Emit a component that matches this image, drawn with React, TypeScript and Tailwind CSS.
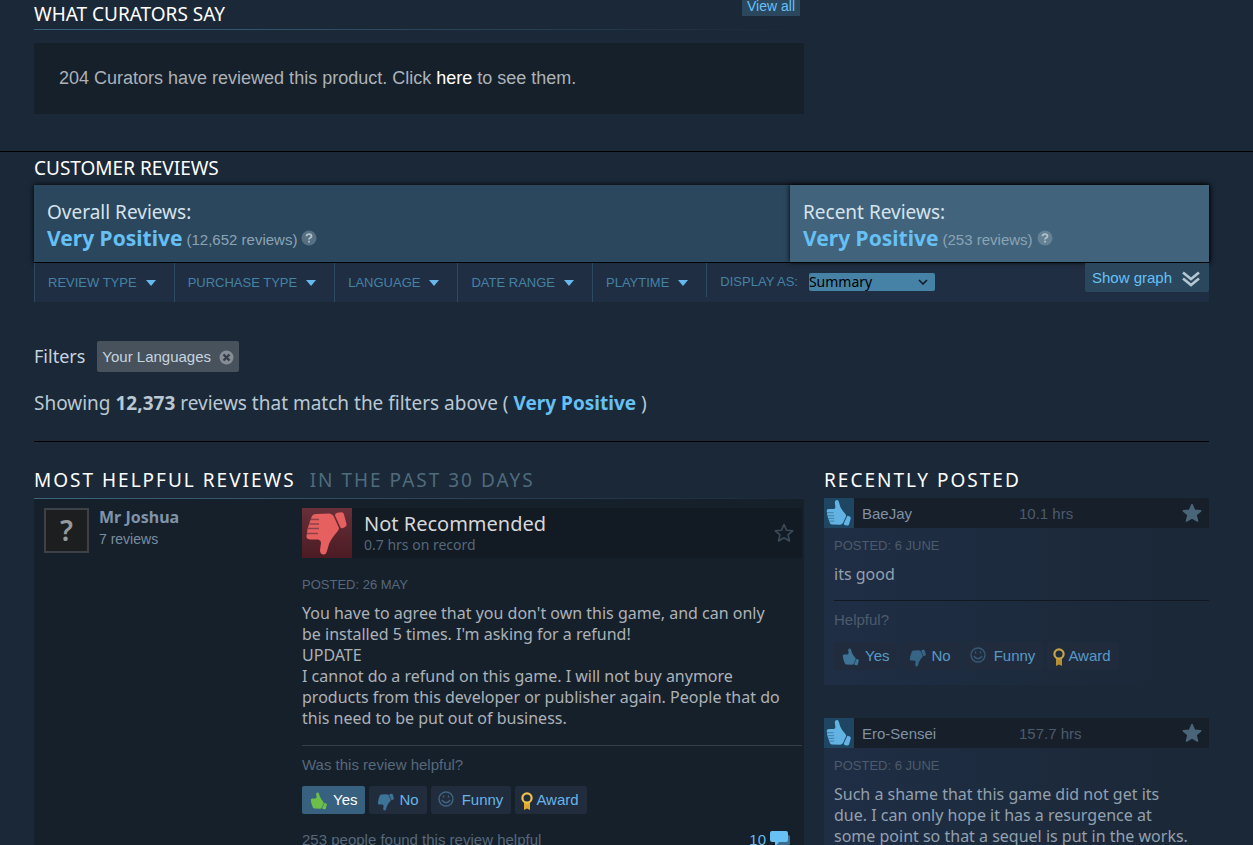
import type { ReactNode } from "react";

const filterMenus = ["REVIEW TYPE", "PURCHASE TYPE", "LANGUAGE", "DATE RANGE", "PLAYTIME"];

const recentReviews = [
  { name: "BaeJay", hours: "10.1 hrs", posted: "POSTED: 6 JUNE", text: "its good" },
  {
    name: "Ero-Sensei",
    hours: "157.7 hrs",
    posted: "POSTED: 6 JUNE",
    text: "Such a shame that this game did not get its due. I can only hope it has a resurgence at some point so that a sequel is put in the works.",
  },
];

/* -------- ICONS -------- */

function Thumb({ down = false, lines = "none", className }: { down?: boolean; lines?: string; className: string }) {
  return (
    <svg viewBox="0 0 50 50" className={className} aria-hidden="true">
      <g transform={down ? undefined : "translate(0 50) scale(1 -1)"}>
        <path
          fill="currentColor"
          d="M10 8Q11 6 14 6L27 5.500Q31 6 32 9L37 20Q37 22 35 24Q29 31 27 36L25 43Q24 47 21 46.500Q18 46 18 42L19 35Q19 32 16 31.500H8Q4 31 4.500 28L5 25.500L5.500 21L7 16.500L8.500 12Z"
        />
        <path fill="currentColor" d="M33 7.500Q33 5 35.500 4.700L39 4.200Q41.500 4 42 6.500L44.500 16Q45 18 43 19L40.500 20.200Q38.500 20.500 38 18.500Z" />
        <path stroke={lines} strokeWidth="1.3" fill="none" d="M9 11.500H17M7.500 16H17M6 20.500H17M5 25.500H16" />
      </g>
    </svg>
  );
}

function Star({ filled = false }: { filled?: boolean }) {
  return (
    <svg
      viewBox="0 0 22 22"
      className={filled ? "h-[22px] w-[22px] text-[#4a6578]" : "h-[22px] w-[22px] text-[#3b4b5a]"}
      fill={filled ? "currentColor" : "none"}
      stroke="currentColor"
      strokeWidth="1.6"
      strokeLinejoin="round"
      aria-hidden="true"
    >
      <path d="M11 2.500L13.500 8.300L19.700 8.800L15 12.900L16.500 19L11 15.800L5.500 19L7 12.900L2.300 8.800L8.500 8.300Z" />
    </svg>
  );
}

function Smile() {
  return (
    <svg viewBox="0 0 16 16" className="mr-2 mb-1 ml-[7px] h-4 w-4 text-[#3f6582]" fill="none" stroke="currentColor" strokeWidth="1.400" aria-hidden="true">
      <circle cx="8" cy="8" r="7" />
      <path d="M5.500 4.500V6.500M10.500 4.500V6.500M3.800 9Q8 14.500 12.200 9" />
    </svg>
  );
}

function Medal() {
  return (
    <svg viewBox="0 0 12 18" className="mr-[3px] ml-[6px] h-[18px] w-3" aria-hidden="true">
      <path fill="#dda92f" d="M3 10H9V18L6 16.500L3 18Z" />
      <circle cx="6" cy="6" r="4.600" fill="none" stroke="#f0c24c" strokeWidth="2.200" />
    </svg>
  );
}

function Help() {
  return (
    <svg viewBox="0 0 16 16" className="h-4 w-4" fill="none" aria-hidden="true">
      <circle cx="8" cy="8" r="7.500" fill="#a9bac5" fillOpacity="0.35" />
      <path stroke="#b3c0ca" strokeWidth="1.800" d="M5.500 6.300Q5.600 4.200 8 4.200Q10.500 4.200 10.500 6.200Q10.500 7.300 9 8Q8 8.500 8 9.600M8 10.800V12.500" />
    </svg>
  );
}

/* -------- SHARED PIECES -------- */

function SectionLine() {
  return <div className="h-px bg-gradient-to-r from-[#3b6580] to-transparent" />;
}

function VoteButton({ active = false, icon, children }: { active?: boolean; icon: ReactNode; children: ReactNode }) {
  return (
    <button
      className={
        active
          ? "flex h-7 items-center rounded-[2px] bg-[#38617f] pt-px pr-2 text-white"
          : "flex h-7 items-center rounded-[2px] bg-[#212c3d] pt-px pr-2 text-[#67b5e6]"
      }
    >
      {icon}
      {children}
    </button>
  );
}

function VoteRow({ voted = false }: { voted?: boolean }) {
  return (
    <div className={voted ? "flex gap-1 text-[15px]" : "flex gap-1 text-[15px] opacity-80"}>
      <VoteButton
        active={voted}
        icon={<Thumb className={voted ? "mr-1 ml-[7px] h-5 w-5 text-[#6cc04a]" : "mr-1 ml-[7px] h-5 w-5 text-[#4585ab]"} />}
      >
        Yes
      </VoteButton>
      <VoteButton icon={<Thumb down className="mt-[2px] mr-[3px] ml-[7px] h-5 w-5 text-[#3d7396]" />}>No</VoteButton>
      <VoteButton icon={<Smile />}>Funny</VoteButton>
      <VoteButton icon={<Medal />}>Award</VoteButton>
    </div>
  );
}

function Summary({ title, count }: { title: string; count: string }) {
  return (
    <>
      <div className="text-[19px] leading-6 text-[#d6e3ec]">{title}</div>
      <div className="flex items-center gap-1">
        <span className="text-[21px] leading-7 font-bold text-[#66c0f4]">Very Positive</span>
        <span className="pt-1 font-['Liberation_Sans',sans-serif] text-[15px] leading-6 text-[#8ba3b4]">{count}</span>
        <Help />
      </div>
    </>
  );
}

/* -------- PAGE -------- */

export default function App() {
  return (
    <main className="h-screen overflow-hidden bg-[#1b2838] font-['Noto_Sans',sans-serif] text-[#acb2b8]">
      {/* Curators */}

      <section className="border-b border-black pr-[44px] pb-[37px] pl-[34px]">
        <div className="max-w-[770px]">
          <div className="flex h-[29px] items-start justify-between pr-1">
            <h2 className="text-[19px] leading-7 text-white">WHAT CURATORS SAY</h2>
            <button className="h-4 bg-[#2a475e] px-[5px] pb-1 font-['Liberation_Sans',sans-serif] text-sm leading-3 text-[#67c1f5]">
              View all
            </button>
          </div>
          <SectionLine />
          <div className="mt-[13px] bg-[#16202b] px-[25px] py-[22px] font-['Liberation_Sans',sans-serif] text-lg leading-[27px]">
            204 Curators have reviewed this product. Click{" "}
            <a href="#curators" className="text-white">
              here
            </a>{" "}
            to see them.
          </div>
        </div>
      </section>

      <div className="pr-[44px] pl-[34px]">
        {/* Score summary */}

        <h2 className="pt-[2px] text-[19px] leading-7 text-white">CUSTOMER REVIEWS</h2>
        <div className="mt-[3px] flex h-[78px] border-b border-black bg-[#2b475e] shadow-[0_0_5px_#000]">
          <div className="flex-1 px-[13px] pt-[15px]">
            <Summary title="Overall Reviews:" count="(12,652 reviews)" />
          </div>
          <div className="w-[419px] bg-[#41637c] px-[13px] pt-[15px] shadow-[0_0_5px_#000]">
            <Summary title="Recent Reviews:" count="(253 reviews)" />
          </div>
        </div>

        {/* Filter menus */}

        <div className="flex h-[39px] items-start bg-[#1f2e42] font-['Liberation_Sans',sans-serif] text-[13px] text-[#4582a5]">
          {filterMenus.map((m) => (
            <button key={m} className="flex h-full items-center gap-2 border-l border-[#2d4a60] pr-[17px] pl-[13px]">
              {m}
              <svg viewBox="0 0 12 6" className="h-[6px] w-3" aria-hidden="true">
                <path fill="#67b9ec" d="M1 0H11L6 6Z" />
              </svg>
            </button>
          ))}
          <div className="flex h-[34px] items-center border-l border-[#2d4a60] pt-[3px] pl-[13px]">
            <label htmlFor="display-as" className="mr-[11px]">
              DISPLAY AS:
            </label>
            <div className="relative">
              <select
                id="display-as"
                className="block h-[18px] w-[126px] appearance-none rounded-[2px] bg-[#4582a5] font-['Noto_Sans',sans-serif] text-sm leading-[18px] text-black"
              >
                <option>Summary</option>
                <option>Expanded</option>
              </select>
              <svg viewBox="0 0 10 6" className="pointer-events-none absolute top-[6px] right-[7px] h-[6px] w-[10px]" fill="none" stroke="#101820" strokeWidth="1.500" aria-hidden="true">
                <path d="M1 1L5 5L9 1" />
              </svg>
            </div>
          </div>
          <button className="ml-auto flex h-[29px] items-center gap-[10px] rounded-b-[2px] bg-[#2a475e] pt-[2px] pr-[9px] pl-[7px] text-[15px] text-[#67c1f5]">
            Show graph
            <svg viewBox="0 0 18 16" className="h-4 w-[18px]" fill="none" stroke="#b4c6d2" strokeWidth="2.600" aria-hidden="true">
              <path d="M1 1.500L9 8L17 1.500M1 7.500L9 14L17 7.500" />
            </svg>
          </button>
        </div>

        {/* Active filters */}

        <div className="mt-[39px] flex h-[31px] items-center text-[#c6d4df]">
          <span className="mr-3 pb-[2px] text-lg">Filters</span>
          <button className="flex h-full items-center gap-2 rounded-[2px] bg-[#48525d] px-[5px] pt-px font-['Liberation_Sans',sans-serif] text-[15px]">
            Your Languages
            <svg viewBox="0 0 15 15" className="h-[15px] w-[15px]" aria-hidden="true">
              <circle cx="7.500" cy="7.500" r="7" fill="#858c93" />
              <path stroke="#343e49" strokeWidth="2.400" d="M4.500 4.500L10.500 10.500M10.500 4.500L4.500 10.500" />
            </svg>
          </button>
        </div>
        <p className="mt-[18px] border-b border-black pb-6 text-[19px] leading-[27px] text-[#b9c8d3]">
          Showing <b>12,373</b> reviews that match the filters above ( <b className="text-[#66c0f4]">Very Positive</b> )
        </p>

        <div className="grid grid-cols-[minmax(0,2fr)_minmax(0,1fr)] gap-x-5 pt-6">
          {/* Most helpful */}

          <section>
            <h2 className="flex h-8 gap-[14px] text-[19px] leading-7 tracking-[2px] text-white">
              MOST HELPFUL REVIEWS <span className="text-[#4f6b7c]">IN THE PAST 30 DAYS</span>
            </h2>
            <SectionLine />
            <article className="flex bg-[#16202b] pt-[9px] pr-[2px] pl-[10px]">
              <div className="flex w-[258px] shrink-0 items-start gap-[10px]">
                <div className="flex h-[45px] w-[45px] items-center justify-center border-2 border-[#3d4248] bg-[#1c1e20] pb-px text-[28px] font-semibold text-[#97999b]">?</div>
                <div>
                  <div className="text-base leading-[18px] font-bold text-[#7f93aa]">Mr Joshua</div>
                  <div className="font-['Liberation_Sans',sans-serif] text-sm leading-[26px] text-[#7b8ea0]">7 reviews</div>
                </div>
              </div>
              <div className="min-w-0 flex-1">
                <header className="flex h-[50px] items-center bg-[#121a23] pr-[7px]">
                  <div className="mr-3 h-[50px] w-[50px] bg-gradient-to-b from-[#683038] to-[#4b1b24]">
                    <Thumb down lines="#8f4048" className="h-[50px] w-[50px] text-[#e66060]" />
                  </div>
                  <div className="flex-1">
                    <h3 className="text-xl leading-6 text-[#d6d7d8]">Not Recommended</h3>
                    <div className="text-sm leading-[18px] text-[#56687a]">0.7 hrs on record</div>
                  </div>
                  <Star />
                </header>
                <div className="mt-4 pt-px font-['Liberation_Sans',sans-serif] text-[13px] leading-5 text-[#56687a]">POSTED: 26 MAY</div>
                <p className="mt-2 border-b border-[#363f4c] pr-5 pb-4 text-base leading-[21px]">
                  You have to agree that you don't own this game, and can only be installed 5 times. I'm asking for a refund!
                  <br />
                  UPDATE
                  <br />
                  I cannot do a refund on this game. I will not buy anymore products from this developer or publisher again. People that do this need to be put out of business.
                </p>
                <div className="font-['Liberation_Sans',sans-serif] text-[15px] text-[#56687a]">
                  <div className="pt-2 pb-[10px] leading-[22px]">Was this review helpful?</div>
                  <VoteRow voted />
                  <div className="mt-[15px] flex items-center justify-between pr-3 leading-[22px]">
                    <span>253 people found this review helpful</span>
                    <a href="#comments" className="flex items-center gap-1 text-[#67b9ec]">
                      10
                      <svg viewBox="0 0 20 18" className="h-[18px] w-5" aria-hidden="true">
                        <path fill="#3c6d8e" d="M6 4H18Q20 4 20 6V13Q20 14 18 14V18L14 14H6Z" />
                        <path fill="#67c1f5" d="M2 0H16Q18 0 18 2V9Q18 11 16 11H9L5 16V11H2Q0 11 0 9V2Q0 0 2 0Z" />
                      </svg>
                    </a>
                  </div>
                </div>
              </div>
            </article>
          </section>

          {/* Recently posted */}

          <section>
            <h2 className="h-8 text-[19px] leading-7 tracking-[2px] text-white">RECENTLY POSTED</h2>
            {recentReviews.map((r) => (
              <article key={r.name} className="mb-[33px] bg-gradient-to-r from-[#1f2e45] to-[#1b2838] to-90% font-['Liberation_Sans',sans-serif]">
                <header className="flex h-[30px] items-center bg-[#171f2b] pr-[6px] text-[15px]">
                  <div className="mr-2 h-[30px] w-[30px] bg-[#1e4662]">
                    <Thumb lines="#397199" className="h-[30px] w-[30px] text-[#62b2e4]" />
                  </div>
                  <span className="w-[157px] pt-[2px] text-[#8091a2]">{r.name}</span>
                  <span className="flex-1 pt-[2px] text-[#4c5b6b]">{r.hours}</span>
                  <Star filled />
                </header>
                <div className="pb-[15px] pl-[10px] text-[#4c5b6b]">
                  <div className="pt-2 text-[13px] leading-5">{r.posted}</div>
                  <p className="mt-2 border-b border-[#101822] pr-4 pb-[15px] font-['Noto_Sans',sans-serif] text-base leading-[21px] text-[#93a0ae]">{r.text}</p>
                  <div className="pt-2 pb-[11px] text-[15px] leading-[22px]">Helpful?</div>
                  <VoteRow />
                </div>
              </article>
            ))}
          </section>
        </div>
      </div>
    </main>
  );
}
